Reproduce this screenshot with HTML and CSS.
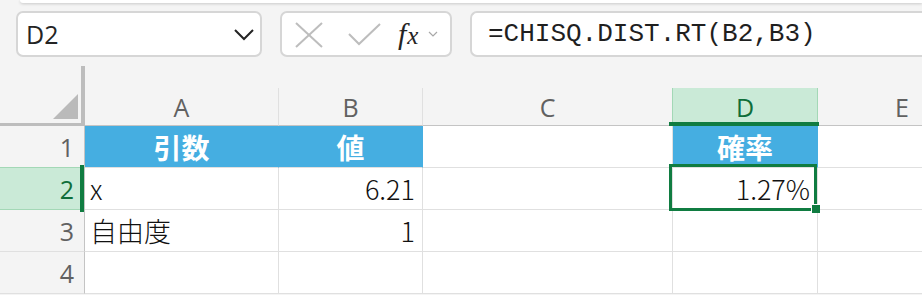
FILE: index.html
```html
<!DOCTYPE html>
<html lang="ja">
<head>
<meta charset="utf-8">
<title>CHISQ.DIST.RT</title>
<link rel="stylesheet" href="styles.css">
</head>
<body>
<div class="topbar"></div>
<div class="toolbar">
  <div class="namebox">
    <span class="name">D2</span>
    <svg class="nb-chev" width="20" height="12" viewBox="0 0 20 12"><polyline points="1,1 10,10 19,1" fill="none" stroke="#242424" stroke-width="2"/></svg>
  </div>
  <div class="fnbox">
    <svg class="ic-x" width="28" height="26" viewBox="0 0 28 26"><line x1="1" y1="1" x2="27" y2="25" stroke="#bdbdbd" stroke-width="2"/><line x1="27" y1="1" x2="1" y2="25" stroke="#bdbdbd" stroke-width="2"/></svg>
    <svg class="ic-check" width="33" height="23" viewBox="0 0 33 23"><polyline points="1,11 11,21 32,1" fill="none" stroke="#bdbdbd" stroke-width="2"/></svg>
    <span class="fx"><i>f</i><i class="fx-x">x</i></span>
    <svg class="ic-chev" width="10" height="6" viewBox="0 0 10 6"><polyline points="1,1 5,5 9,1" fill="none" stroke="#a8a8a8" stroke-width="1.2"/></svg>
  </div>
  <div class="formula">=CHISQ.DIST.RT(B2,B3)</div>
</div>
<div class="sheet">
  <div class="corner"><svg width="25" height="25" viewBox="0 0 25 25"><polygon points="25,0 25,25 0,25" fill="#bababa"/></svg></div>
  <div class="ch">A</div>
  <div class="ch">B</div>
  <div class="ch pre-sel">C</div>
  <div class="ch ch-sel">D</div>
  <div class="ch ch-e">E</div>

  <div class="rh">1</div>
  <div class="c hdr">引数</div>
  <div class="c hdr">値</div>
  <div class="c"></div>
  <div class="c hdr">確率</div>
  <div class="c"></div>

  <div class="rh rh-sel">2</div>
  <div class="c">x</div>
  <div class="c num">6.21</div>
  <div class="c"></div>
  <div class="c num active">1.27%<span class="handle"></span></div>
  <div class="c"></div>

  <div class="rh">3</div>
  <div class="c">自由度</div>
  <div class="c num">1</div>
  <div class="c"></div>
  <div class="c"></div>
  <div class="c"></div>

  <div class="rh">4</div>
  <div class="c"></div>
  <div class="c"></div>
  <div class="c"></div>
  <div class="c"></div>
  <div class="c"></div>
</div>
</body>
</html>
```
FILE: styles.css
```css
html, body {
  margin: 0;
  padding: 0;
}
body {
  width: 922px;
  height: 295px;
  overflow: hidden;
  background: #f4f4f4;
  font-family: "Open Sans", "Noto Sans", sans-serif;
}
.topbar {
  height: 3px;
  margin-left: 20px;
  background: #ffffff;
  border-bottom-left-radius: 6px;
  box-shadow: 0 1px 3px rgba(0, 0, 0, 0.18);
}
.toolbar {
  display: flex;
  gap: 18px;
  padding-left: 16px;
  margin-top: 8px;
  height: 46px;
}
.namebox, .fnbox, .formula {
  box-sizing: border-box;
  height: 46px;
  background: #ffffff;
  border: 2px solid #d6d6d6;
  border-radius: 7px;
  display: flex;
  align-items: center;
}
.namebox {
  width: 246px;
  padding-left: 8px;
}
.name {
  font-size: 25px;
  color: #242424;
  flex: 1;
}
.nb-chev {
  margin-right: 6px;
  margin-top: 2px;
}
.fnbox {
  width: 172px;
  padding-left: 13px;
}
.ic-x { margin-top: 1px; }
.ic-check { margin-left: 25px; margin-top: 1px; }
.fx {
  margin-left: 17px;
  font-family: "Liberation Serif", serif;
  font-size: 30px;
  color: #242424;
  line-height: 1;
  white-space: nowrap;
}
.fx-x {
  font-size: 25px;
  margin-left: 1px;
}
.ic-chev { margin-left: 10px; }
.formula {
  flex: 1;
  min-width: 0;
  padding-left: 16px;
  font-family: "Liberation Mono", monospace;
  font-size: 26px;
  color: #1f1f1f;
  white-space: nowrap;
  border-right: none;
  border-top-right-radius: 0;
  border-bottom-right-radius: 0;
}
.sheet {
  margin-top: 9px;
  display: grid;
  grid-template-columns: 85px 194px 144px 250px 145px 1fr;
  grid-template-rows: 60px 42px 42px 42px 42px;
  font-family: "Open Sans", "Noto Sans", sans-serif;
}
.corner {
  box-sizing: border-box;
  border-right: 4px solid #bdbdbd;
  border-bottom: 3px solid #bdbdbd;
  display: flex;
  justify-content: flex-end;
  align-items: flex-end;
  padding: 0 3px 4px 0;
}
.corner svg { display: block; }
.ch {
  box-sizing: border-box;
  align-self: end;
  height: 38px;
  border-right: 1px solid #e0e0e0;
  border-bottom: 1px solid #c4c4c4;
  display: flex;
  align-items: center;
  justify-content: center;
  font-size: 25px;
  color: #616161;
}
.ch.ch-e {
  justify-content: flex-start;
  padding-left: 77px;
  border-right: none;
}
.ch.pre-sel { border-right-color: #a3d8b6; }
.ch-sel {
  position: relative;
  background: #caead7;
  border-right-color: #a3d8b6;
  color: #0f6e3a;
}
.ch-sel::after {
  content: "";
  position: absolute;
  left: -4px;
  right: -2px;
  bottom: -1px;
  height: 4px;
  background: #107c41;
}
.rh {
  position: relative;
  box-sizing: border-box;
  border-right: 1px solid #c4c4c4;
  border-bottom: 1px solid #e0e0e0;
  display: flex;
  align-items: center;
  justify-content: flex-end;
  padding-right: 10px;
  font-size: 25px;
  color: #616161;
}
.rh-sel {
  background: #caead7;
  color: #0f6e3a;
  border-bottom-color: #a3d8b6;
  box-shadow: 0 -1px 0 #a3d8b6;
}
.rh-sel::after {
  content: "";
  position: absolute;
  right: 0;
  top: -3px;
  bottom: -3px;
  width: 4px;
  background: #107c41;
}
.c {
  box-sizing: border-box;
  background: #ffffff;
  border-right: 1px solid #e0e0e0;
  border-bottom: 1px solid #e0e0e0;
  display: flex;
  align-items: center;
  padding: 0 7px 0 5px;
  font-family: "Noto Sans CJK JP", sans-serif;
  font-size: 27px;
  font-weight: 300;
  color: #111111;
  white-space: nowrap;
}
.c:nth-child(6n) { border-right: none; }
.c.hdr {
  background: #45aee1;
  border-right-color: #45aee1;
  color: #ffffff;
  font-weight: 700;
  font-size: 28px;
  justify-content: center;
  padding: 0;
}
.c.num { justify-content: flex-end; }
.active { position: relative; }
.active::after {
  content: "";
  position: absolute;
  left: -4px;
  top: -4px;
  right: 0;
  bottom: -2px;
  border: 3px solid #107c41;
}
.handle {
  position: absolute;
  right: -3px;
  bottom: -4px;
  width: 8px;
  height: 8px;
  background: #107c41;
  box-shadow: -1px -1px 0 #ffffff;
  z-index: 2;
}
```
